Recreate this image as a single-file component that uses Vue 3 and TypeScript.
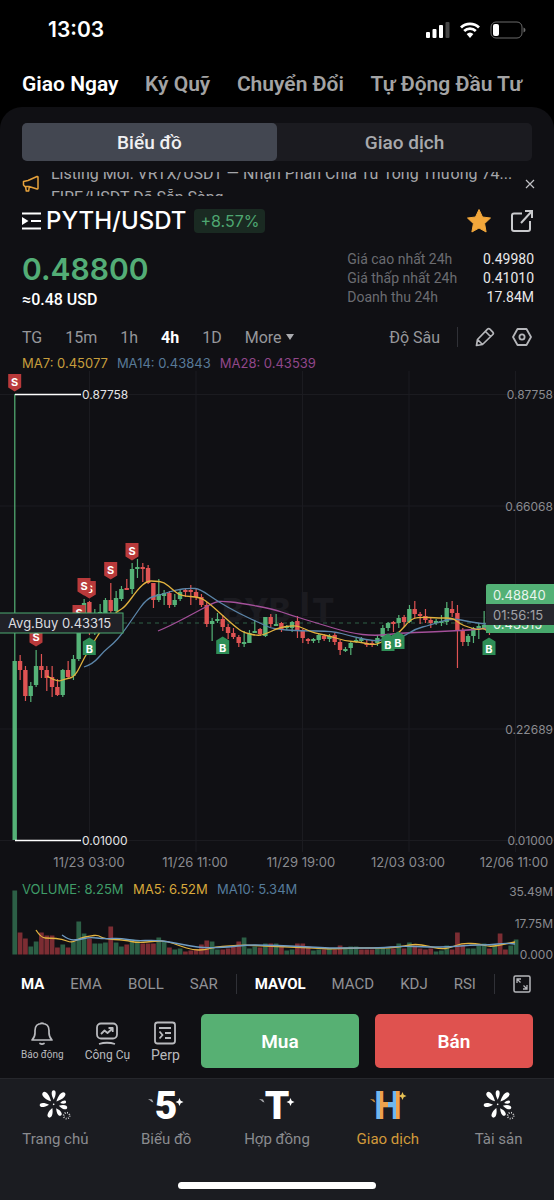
<script setup lang="ts">
import { ref } from 'vue'

type Side = 'g' | 'r'
type Candle = [side: Side, high: number, low: number, top: number, bottom: number]

const markets = ['Giao Ngay', 'Ký Quỹ', 'Chuyển Đổi', 'Tự Động Đầu Tư']
const market = ref(markets[0])
const views = ['Biểu đồ', 'Giao dịch']
const view = ref(views[0])
const frames = ['TG', '15m', '1h', '4h', '1D']
const frame = ref('4h')
const stats = [
  { label: 'Giá cao nhất 24h', value: '0.49980' },
  { label: 'Giá thấp nhất 24h', value: '0.41010' },
  { label: 'Doanh thu 24h', value: '17.84M' },
]
const mainIndicators = ['MA', 'EMA', 'BOLL', 'SAR']
const subIndicators = ['MAVOL', 'MACD', 'KDJ', 'RSI']
const mainIndicator = ref('MA')
const subIndicator = ref('MAVOL')

const STEP = 16 / 3
const cx = (i: number): number => 14.7 + i * STEP

const candles: Candle[] = [
  ['g', 394, 840, 661, 840], ['r', 655, 680, 661, 670], ['r', 666, 701, 670, 696], ['g', 682, 702, 686, 696],
  ['g', 650, 687, 666, 685], ['r', 654, 678, 666, 670], ['r', 666, 691, 670, 678], ['r', 666, 697, 677, 687],
  ['r', 679, 696, 687, 695], ['g', 669, 697, 670, 695], ['r', 661, 678, 670, 677], ['g', 655, 680, 659, 676],
  ['g', 610, 661, 612, 659], ['g', 599, 628, 603, 625], ['r', 601, 635, 602, 630], ['g', 609, 635, 614, 625],
  ['g', 604, 622, 612, 620], ['g', 598, 616, 600, 613], ['r', 583, 613, 600, 611], ['g', 591, 612, 598, 611],
  ['g', 586, 601, 589, 599], ['r', 579, 590, 588, 590], ['g', 563, 594, 569, 589], ['g', 559, 578, 567, 569],
  ['r', 563, 582, 567, 569], ['r', 565, 584, 568, 583], ['r', 583, 608, 583, 600], ['g', 579, 602, 594, 600],
  ['g', 590, 605, 593, 596], ['r', 591, 608, 593, 605], ['g', 594, 607, 600, 605], ['g', 590, 601, 592, 599],
  ['r', 588, 597, 590, 592], ['r', 585, 605, 590, 592], ['r', 588, 600, 592, 597], ['r', 594, 607, 597, 605],
  ['r', 602, 627, 605, 624], ['g', 618, 641, 621, 624], ['g', 613, 623, 619, 621], ['r', 615, 631, 619, 627],
  ['r', 624, 639, 627, 633], ['r', 628, 639, 633, 637], ['r', 635, 647, 637, 643], ['g', 631, 647, 642, 644],
  ['g', 630, 643, 633, 643], ['g', 620, 633, 631, 633], ['r', 628, 636, 629, 634], ['g', 617, 637, 617, 636],
  ['r', 614, 627, 617, 624], ['g', 614, 626, 624, 626], ['r', 622, 632, 623, 629], ['g', 625, 630, 626, 628],
  ['g', 621, 632, 622, 628], ['r', 616, 638, 621, 631], ['r', 629, 643, 631, 638], ['r', 638, 644, 639, 641],
  ['g', 638, 643, 639, 641], ['g', 634, 643, 635, 640], ['r', 634, 641, 636, 639], ['g', 634, 642, 636, 639],
  ['r', 633, 645, 635, 642], ['r', 640, 655, 642, 650], ['g', 647, 652, 649, 651], ['g', 641, 655, 643, 648],
  ['g', 638, 643, 640, 642], ['g', 637, 643, 639, 641], ['r', 640, 647, 643, 645], ['r', 640, 647, 643, 645],
  ['g', 635, 646, 638, 643], ['g', 625, 639, 628, 637], ['g', 622, 631, 623, 628], ['r', 621, 632, 622, 624],
  ['g', 615, 628, 618, 623], ['r', 615, 627, 617, 622], ['g', 605, 623, 609, 622], ['r', 601, 618, 609, 614],
  ['r', 612, 624, 614, 616], ['r', 609, 623, 616, 620], ['r', 617, 628, 620, 623], ['g', 619, 625, 621, 623],
  ['g', 615, 626, 621, 623], ['g', 602, 625, 608, 622], ['r', 601, 617, 609, 613], ['r', 605, 668, 613, 631],
  ['r', 628, 646, 630, 642], ['g', 634, 646, 636, 642], ['g', 627, 643, 628, 636], ['g', 623, 639, 626, 629],
  ['g', 611, 630, 625, 628], ['r', 627, 635, 629, 632],
]

const volumes =
  'g64 r22 r16 g8 g13 r22 r19 r19 r7 g10 r7 g13 g33 g21 r16 g11 g11 g12 r28 g12 g8 r10 g15 g14 r11 r11 r11 g17 g13 r7 g5 g6 r3 r4 r5 r10 r14 g13 g5 r5 r6 r8 r13 g17 g6 g8 r7 g11 r11 g11 r8 g4 g5 r11 r11 r8 g4 g5 r5 g6 r5 r9 g7 g8 g8 r5 r5 r5 g6 g7 g6 r6 g11 r6 g12 r9 r6 r5 r6 g3 g4 g9 r5 r22 r10 g6 g6 g9 g11 r6 g9 r21 r5 g9 g15'
    .split(' ')
    .map((v) => ({ side: v[0] as Side, size: Number(v.slice(1)) }))

// Smooth curve through a list of points, using quadratic segments between midpoints
function curve(source: string): string {
  const pts = source.split(' ').map((p) => p.split(',').map(Number))
  let d = `M${pts[0][0]} ${pts[0][1]}`
  for (let i = 1; i < pts.length - 1; i++) {
    const [x, y] = pts[i]
    const [nx, ny] = pts[i + 1]
    d += ` Q${x} ${y} ${(x + nx) / 2} ${(y + ny) / 2}`
  }
  const last = pts[pts.length - 1]
  return `${d} L${last[0]} ${last[1]}`
}

const ma7 = curve('47,676 57,682 65,679 75,677 84,658 95,640 100,632 110,618 118,611 125,607 138,589 147,581 155,581 164,582 173,590 181,596 200,597 210,604 222,615 238,629 245,633 259,636 268,633 278,628 295,625 305,629 314,633 330,636 345,641 360,642 373,645 380,643 390,638 400,632 410,620 418,617 440,618 453,618 460,624 468,627 478,630 484,628 488,632')
const ma14 = curve('84,667 93,664 104,651 113,644 122,634 133,618 147,598 160,595 175,590 190,588 200,589 217,601 240,614 262,624 273,629 300,631 333,631 350,636 373,641 382,640 403,637 415,629 430,625 452,618 470,622 486,624')
const ma28 = curve('158,631 170,626 200,610 215,602 222,601 240,603 273,609 290,615 320,624 350,633 375,636 400,633 430,632 450,631 470,630 488,628')
const vol5 = curve('36,930 41,938 50,938 62,939 72,943 80,938 90,936 98,935 104,939 125,940 138,943 155,941 167,941 180,946 193,950 205,950 215,947 230,946 245,945 265,946 290,947 315,948 330,949 350,948 370,948 390,948 405,946 415,944 428,946 440,949 450,948 462,943 480,944 490,947 505,944 515,942')
const vol10 = curve('62,935 69,940 78,940 90,937 104,939 120,938 135,941 155,940 170,942 190,946 205,948 230,947 245,945 265,945 290,946 310,947 330,948 350,948 380,948 400,946 430,947 450,947 470,945 490,945 505,943 515,944')

const sells = [
  [14.7, 374], [36, 629], [79, 605], [89.3, 581], [84, 578], [110.7, 562], [132, 543],
]
const buys = [[89.3, 655], [222.7, 654], [388, 651], [398, 649], [489, 655]]

const priceTicks = [
  { y: 399, text: '0.87758' }, { y: 511, text: '0.66068' }, { y: 734, text: '0.22689' }, { y: 845, text: '0.01000' },
]
const volTicks = [{ y: 896, text: '35.49M' }, { y: 928, text: '17.75M' }, { y: 959, text: '0.000' }]
const dates = [
  { x: 89, text: '11/23 03:00' }, { x: 195, text: '11/26 11:00' }, { x: 301, text: '11/29 19:00' }, { x: 408, text: '12/03 03:00' }, { x: 514, text: '12/06 11:00' },
]

const petals = [
  { a: 0, s: 14, e: 42, w: 8 }, { a: 44, s: 12, e: 48, w: 10 }, { a: 78, s: 20, e: 38, w: 6 }, { a: 105, s: 16, e: 42, w: 8 },
  { a: 147, s: 14, e: 40, w: 8 }, { a: 200, s: 12, e: 42, w: 9 }, { a: 266, s: 14, e: 42, w: 8 }, { a: 318, s: 12, e: 48, w: 10 },
]
const petalPath = (s: number, e: number, w: number): string =>
  `M0 ${-s} C${-w} ${-(s + e) / 2} ${-w} ${-e} 0 ${-e} C${w} ${-e} ${w} ${-(s + e) / 2} 0 ${-s}Z`

const nav = [
  { label: 'Trang chủ', icon: 'spark' },
  { label: 'Biểu đồ', icon: '5' },
  { label: 'Hợp đồng', icon: 'T' },
  { label: 'Giao dịch', icon: 'H' },
  { label: 'Tài sản', icon: 'spark' },
]
const activeNav = 'Giao dịch'
</script>

<template>
  <div class="app">
    <header class="status">
      <time class="clock">13:03</time>
      <div class="status-icons">
        <svg width="24" height="18" viewBox="0 0 24 18" aria-hidden="true">
          <rect x="0" y="11" width="4" height="6" rx="1" fill="#fff" />
          <rect x="6.500" y="8" width="4" height="9" rx="1" fill="#fff" />
          <rect x="13" y="4" width="4" height="13" rx="1" fill="#fff" />
          <rect x="19.500" y="1" width="4" height="16" rx="1" fill="#444" />
        </svg>
        <svg width="22" height="18" viewBox="0 0 22 18" aria-hidden="true">
          <path d="M2 6.500a13 13 0 0 1 18 0M5.200 10a8.500 8.500 0 0 1 11.600 0" fill="none" stroke="#fff" stroke-width="2.800" />
          <path d="M7.600 13a5 5 0 0 1 6.800 0L11 17z" fill="#fff" />
        </svg>
        <svg width="36" height="18" viewBox="0 0 36 18" aria-hidden="true">
          <rect x="1" y="1" width="31" height="16" rx="5" fill="none" stroke="#6a6a6a" />
          <rect x="3" y="3" width="6" height="12" rx="2" fill="#fff" />
          <path d="M33.500 6.500v5q2-.6 2-2.500t-2-2.500" fill="#6a6a6a" />
        </svg>
      </div>
    </header>

    <nav class="markets">
      <button v-for="m in markets" :key="m" type="button" :class="{ on: market === m }" @click="market = m">{{ m }}</button>
    </nav>

    <main class="panel">
      <div class="segment">
        <button v-for="v in views" :key="v" type="button" :class="{ on: view === v }" @click="view = v">{{ v }}</button>
      </div>

      <div class="notice">
        <svg width="18" height="18" viewBox="0 0 18 18" fill="none" stroke="#e6a23c" stroke-width="1.500" stroke-linejoin="round" aria-hidden="true">
          <path d="M1.500 6.500 6 5.500 15 1.500q1-.3 1 .8v11q0 1-1 .7L7 11.500H2.800L1.500 10zM3.500 11.500l.8 4.500h2.400l.6-4.500" />
        </svg>
        <div class="ticker">
          <p>Listing Mới: VRTX/USDT — Nhận Phần Chia Từ Tổng Thưởng 74...</p>
          <p>FIRE/USDT Đã Sẵn Sàng</p>
        </div>
        <button type="button" class="icon-btn" aria-label="Đóng">
          <svg width="12" height="12" viewBox="0 0 12 12" stroke="#c0c1c5" stroke-width="1.200"><path d="M2 2l8 8M10 2l-8 8" /></svg>
        </button>
      </div>

      <section class="summary">
        <div class="pair">
          <svg width="20" height="18" viewBox="0 0 20 18" aria-hidden="true">
            <path d="M0 1.500h19M9 9h10M0 16.500h19" stroke="#fff" stroke-width="2.200" fill="none" />
            <path d="M0 5 6.500 9 0 13z" fill="#fff" />
          </svg>
          <h1>PYTH/USDT</h1>
          <span class="change">+8.57%</span>
          <div class="pair-tools">
            <button type="button" class="icon-btn" aria-label="Yêu thích">
              <svg width="26" height="26" viewBox="0 0 26 26"><path d="M13 1.500 16.500 9l8 1-5.900 5.600 1.500 8.400-7.100-4-7.100 4 1.500-8.400L1.500 10l8-1z" fill="#f2a73b" stroke="#f2a73b" stroke-linejoin="round" /></svg>
            </button>
            <button type="button" class="icon-btn" aria-label="Chia sẻ">
              <svg width="24" height="24" viewBox="0 0 24 24" fill="none" stroke="#c9cacd" stroke-width="2"><path d="M12 4.500H4q-2 0-2 2V20q0 2 2 2h14q2 0 2-2v-8M15 2h7v7M22 2 11 14" /></svg>
            </button>
          </div>
        </div>
        <div class="figures">
          <div>
            <strong class="price">0.48800</strong>
            <p class="usd">≈0.48 USD</p>
          </div>
          <dl class="stats">
            <template v-for="s in stats" :key="s.label">
              <dt>{{ s.label }}</dt>
              <dd>{{ s.value }}</dd>
            </template>
          </dl>
        </div>
      </section>

      <div class="frames">
        <button v-for="f in frames" :key="f" type="button" :class="{ on: frame === f }" @click="frame = f">{{ f }}</button>
        <button type="button" class="more">More<svg width="8" height="6" viewBox="0 0 8 6"><path d="M0 0h8L4 6z" fill="#aaabaf" /></svg></button>
        <div class="frame-tools">
          <button type="button">Độ Sâu</button>
          <i class="rule"></i>
          <button type="button" class="icon-btn" aria-label="Vẽ">
            <svg width="20" height="20" viewBox="0 0 20 20" fill="none" stroke="#b5b6ba" stroke-width="1.700" stroke-linejoin="round"><path d="M1.500 18.500l1-6L12.500 2.200q1.200-1.200 2.400 0l2.900 2.900q1.200 1.200 0 2.400L7.500 17.500zM2.500 12.500l5 5M10.500 4.500l5 5" /></svg>
          </button>
          <button type="button" class="icon-btn" aria-label="Cài đặt">
            <svg width="20" height="20" viewBox="0 0 20 20" fill="none" stroke="#b5b6ba" stroke-width="1.800" stroke-linejoin="round"><path d="M5.500 2h9L19 10l-4.500 8h-9L1 10z" /><circle cx="10" cy="10" r="2.600" /></svg>
          </button>
        </div>
      </div>

      <p class="legend">
        <span class="yellow">MA7: 0.45077</span><span class="blue">MA14: 0.43843</span><span class="pink">MA28: 0.43539</span>
      </p>

      <svg class="chart" viewBox="0 371 554 593" role="img" aria-label="PYTH/USDT 4h">
        <g class="grid">
          <path v-for="x in [89.5, 196, 302.5, 409, 515.500]" :key="x" :d="`M${x} 371V852`" />
          <path v-for="y in [394.5, 506, 617.5, 729, 840.5]" :key="y" :d="`M0 ${y}H554`" />
        </g>
        <text class="mark" y="622"><tspan x="222">BYB</tspan><tspan x="300" dy="-6">I</tspan><tspan x="312" dy="6">T</tspan></text>
        <path d="M123 623H486" stroke="#2e6146" stroke-dasharray="4 4" />

        <g v-for="(c, i) in candles" :key="i" :class="c[0]">
          <rect :x="cx(i) - 0.5" :y="c[1]" width="1.200" :height="c[2] - c[1]" />
          <rect :x="cx(i) - 2.200" :y="c[3]" width="4.400" :height="Math.max(1, c[4] - c[3])" />
        </g>

        <g class="line">
          <path :d="ma28" stroke="#a4509a" />
          <path :d="ma14" stroke="#5c86aa" />
          <path :d="ma7" stroke="#e2b23e" />
        </g>

        <path d="M15 394.500H81M15 840.500H81" stroke="#fff" stroke-width="1.300" />
        <text class="extreme" x="82" y="399">0.87758</text>
        <text class="extreme" x="82" y="845">0.01000</text>

        <g v-for="(s, i) in sells" :key="'s' + i" :transform="`translate(${s[0]} ${s[1]})`">
          <path d="M-6.500 0h13v13.500L0 17.500l-6.500-4z" fill="#b93a3b" />
          <text class="flag" y="12">S</text>
        </g>
        <g v-for="(b, i) in buys" :key="'b' + i" :transform="`translate(${b[0]} ${b[1]})`">
          <path d="M-6.500 0h13v-13.500L0-17.500l-6.500 4z" fill="#2f8f57" />
          <text class="flag" y="-2">B</text>
        </g>

        <rect x="-1" y="613" width="124" height="20" fill="#202127" stroke="#4cab72" />
        <text class="avg" x="8" y="628">Avg.Buy 0.43315</text>

        <text v-for="t in priceTicks" :key="t.y" class="tick" x="553" :y="t.y">{{ t.text }}</text>
        <rect x="486" y="613" width="68" height="20" fill="#47a86c" />
        <text class="badge" x="493" y="629">0.43315</text>
        <rect x="486" y="604" width="68" height="21" fill="#25262c" />
        <text class="badge dim" x="493" y="620">01:56:15</text>
        <path d="M486 604v-18q0-2 2-2h66v20z" fill="#53b176" />
        <text class="badge" x="493" y="600">0.48840</text>

        <text v-for="d in dates" :key="d.x" class="date" :x="d.x" y="867">{{ d.text }}</text>

        <g v-for="(v, i) in volumes" :key="'v' + i" :class="['vol', v.side]">
          <rect :x="cx(i) - 2.300" :y="954.500 - v.size" width="4.700" :height="v.size" />
        </g>
        <g class="line">
          <path :d="vol5" stroke="#e2b23e" />
          <path :d="vol10" stroke="#6f9cc4" />
        </g>
        <text class="vol-legend" x="22" y="894" fill="#3f9c68">VOLUME: 8.25M</text>
        <text class="vol-legend" x="133" y="894" fill="#d8a93b">MA5: 6.52M</text>
        <text class="vol-legend" x="217" y="894" fill="#567c9c">MA10: 5.34M</text>
        <text v-for="t in volTicks" :key="t.y" class="tick" x="553" :y="t.y">{{ t.text }}</text>
      </svg>

      <div class="indicators">
        <div class="group">
          <button v-for="m in mainIndicators" :key="m" type="button" :class="{ on: mainIndicator === m }" @click="mainIndicator = m">{{ m }}</button>
        </div>
        <i class="rule"></i>
        <div class="group">
          <button v-for="s in subIndicators" :key="s" type="button" :class="{ on: subIndicator === s }" @click="subIndicator = s">{{ s }}</button>
        </div>
        <i class="rule"></i>
        <button type="button" class="icon-btn" aria-label="Toàn màn hình">
          <svg width="18" height="18" viewBox="0 0 18 18" fill="none" stroke="#b5b6ba" stroke-width="1.500"><rect x="1" y="1" width="16" height="16" rx="1.500" /><path d="M4 8V4h4M4 4l3.500 3.500M14 10v4h-4M14 14l-3.500-3.500" stroke-width="1.300" /></svg>
        </button>
      </div>

      <div class="actions">
        <button type="button" class="tool small">
          <svg width="28" height="28" viewBox="0 0 28 28" fill="none" stroke="#b9babe" stroke-width="1.700" stroke-linejoin="round" stroke-linecap="round"><path d="M4 21h20c-2-2-3-4-3-7v-2.500q0-7-7-7t-7 7V14c0 3-1 5-3 7zM12.500 4.500q1.500-1 3 0M12 24.500q2 1.200 4 0" /></svg>
          <span>Báo động</span>
        </button>
        <button type="button" class="tool mid">
          <svg width="28" height="28" viewBox="0 0 28 28" fill="none" stroke="#b9babe" stroke-width="1.800" stroke-linejoin="round"><rect x="4" y="4.500" width="20" height="15" rx="4" /><path d="M8 15l3.500-3.500 3 2.500 5-4.500M15.500 9h4.200v4M6 25q8-2.500 16 0" /></svg>
          <span>Công Cụ</span>
        </button>
        <button type="button" class="tool">
          <svg width="28" height="28" viewBox="0 0 28 28" fill="none" stroke="#b9babe" stroke-width="1.800"><rect x="4" y="3.500" width="20" height="21" rx="2.500" /><path d="M8 9h12M14 14h6M14 19h6M8.500 12.500l3 3.500-3 3.500" /></svg>
          <span>Perp</span>
        </button>
        <button type="button" class="trade buy">Mua</button>
        <button type="button" class="trade sell">Bán</button>
      </div>
    </main>

    <footer class="bottom">
      <nav>
        <a v-for="n in nav" :key="n.label" href="#" :class="{ on: n.label === activeNav }">
          <svg v-if="n.icon === 'spark'" width="32" height="32" viewBox="0 0 96 96" fill="#fff" aria-hidden="true">
            <g transform="translate(44 46)">
              <path v-for="p in petals" :key="p.a" :d="petalPath(p.s, p.e, p.w)" :transform="`rotate(${p.a})`" />
              <circle r="2.500" />
            </g>
            <circle cx="83" cy="80" r="9" fill="none" stroke="#e8e8e8" stroke-width="5" stroke-dasharray="2.500 4.570" />
          </svg>
          <svg v-else class="glyph" width="36" height="32" viewBox="0 0 36 32" aria-hidden="true">
            <defs>
              <linearGradient id="duo" gradientUnits="userSpaceOnUse" x1="6" x2="30" y1="0" y2="0">
                <stop offset=".17" stop-color="#6fb7ee" /><stop offset=".17" stop-color="#eea24c" />
                <stop offset=".5" stop-color="#eea24c" /><stop offset=".5" stop-color="#6fb7ee" />
                <stop offset=".84" stop-color="#6fb7ee" /><stop offset=".84" stop-color="#eea24c" />
              </linearGradient>
            </defs>
            <text class="letter" x="18" y="30" :fill="n.icon === 'H' ? 'url(#duo)' : '#fff'">{{ n.icon }}</text>
            <path :fill="n.icon === 'H' ? '#e8c255' : '#fff'" :transform="n.icon === 'H' ? 'translate(1 -6)' : ''" d="M31.500 9l1.200 2.800 2.800 1.200-2.800 1.200-1.200 2.800-1.200-2.800-2.800-1.200 2.800-1.200z" />
            <path :fill="n.icon === 'H' ? '#c78a3a' : '#a9aaae'" d="M0 10l4 .5 1.500 3-2-.8-1-.9z" />
          </svg>
          <span>{{ n.label }}</span>
        </a>
      </nav>
      <div class="home-bar"></div>
    </footer>
  </div>
</template>

<style>
body {
  margin: 0;
  background: #000;
}
</style>

<style scoped>
.app {
  --ui: Roboto, 'Noto Sans', sans-serif;
  --num: Inter, 'Liberation Sans', sans-serif;
  min-height: 100vh;
  background: #000;
  color: #fff;
  font-family: var(--ui);
  display: flex;
  flex-direction: column;
}
h1, p, dl, dd { margin: 0; }
button {
  border: 0;
  padding: 0;
  background: none;
  color: inherit;
  font: inherit;
  white-space: nowrap;
}
.icon-btn { display: flex; }
.rule { width: 1px; height: 20px; background: #303137; }

.status {
  height: 60px;
  padding: 0 28px 0 48px;
  display: flex;
  align-items: center;
  justify-content: space-between;
}
.clock { font: 600 21px/24px var(--num); }
.status-icons { display: flex; align-items: center; gap: 9px; }

.markets {
  height: 47px;
  padding: 0 32px 0 22px;
  display: flex;
  align-items: center;
  justify-content: space-between;
  font-size: 21px;
  font-weight: 600;
  color: #a3a3a4;
}
.markets .on { color: #fff; }

.panel {
  flex: 1;
  background: #101014;
  border-radius: 22px 22px 0 0;
  padding-top: 16px;
}
.segment {
  margin: 0 22px;
  height: 38px;
  display: flex;
  background: #1b1b20;
  border-radius: 5px;
}
.segment button {
  flex: 1;
  border-radius: 5px;
  font-size: 19px;
  font-weight: 500;
  color: #a8a9ac;
}
.segment .on { background: #434751; color: #f0f0f2; }

.notice {
  margin: 11px 18px 0 22px;
  height: 24px;
  display: flex;
  align-items: center;
  gap: 11px;
}
.ticker {
  flex: 1;
  min-width: 0;
  height: 24px;
  overflow: hidden;
  font-size: 16px;
  line-height: 24px;
  color: #a5a6aa;
}
.ticker p { white-space: nowrap; }
.ticker p:first-child { margin-top: -10px; }

.summary { padding: 8px 20px 0 22px; }
.pair { height: 34px; display: flex; align-items: center; }
.pair h1 { margin-left: 4px; font: 500 24px/34px var(--num); }
.change {
  margin-left: 8px;
  padding: 0 6px;
  border-radius: 4px;
  background: #1a2a22;
  color: #4ea671;
  font: 16px/24px var(--num);
}
.pair-tools { margin-left: auto; display: flex; align-items: center; gap: 18px; }
.figures { margin-top: 12px; display: flex; justify-content: space-between; }
.price { display: block; font: 600 30px/38px var(--num); color: #53ad76; }
.usd { font-size: 16px; font-weight: 500; line-height: 24px; }
.stats {
  display: grid;
  grid-template-columns: auto auto;
  column-gap: 26px;
  align-content: start;
  font-size: 14px;
  line-height: 19px;
}
.stats dt { color: #6b6c71; }
.stats dd { text-align: right; color: #e8e8ea; }

.frames {
  height: 38px;
  margin-top: 6px;
  padding: 0 22px;
  display: flex;
  align-items: center;
  gap: 23px;
  font-size: 16px;
  color: #96979b;
}
.frames .on { color: #fff; font-weight: 700; }
.more { display: flex; align-items: center; gap: 4px; }
.frame-tools { margin-left: auto; display: flex; align-items: center; gap: 17px; }

.legend {
  padding: 0 0 1px 22px;
  display: flex;
  gap: 9px;
  font: 13px/14px var(--num);
}
.yellow { color: #c79e3c; }
.blue { color: #587a98; }
.pink { color: #91478a; }

.chart { display: block; width: 100%; font-family: Inter, 'Liberation Sans', sans-serif; }
.grid { stroke: #1b1b20; fill: none; }
.g { fill: #55b277; }
.r { fill: #df5353; }
.vol.g { fill: #2c5f46; }
.vol.r { fill: #7c2d33; }
.line { fill: none; stroke-width: 1.3; }
.mark { font-size: 33px; font-weight: 800; fill: #1b1b20; }
.extreme { font-size: 12px; fill: #e4e4e6; }
.tick { font-size: 12px; fill: #8a8b90; text-anchor: end; }
.date { font-size: 13px; fill: #8a8b90; text-anchor: middle; }
.flag { font-size: 11px; font-weight: 700; fill: #fff; text-anchor: middle; }
.avg { font-size: 13px; fill: #dcdde0; }
.badge { font-size: 13px; fill: #e9f5ee; }
.dim { fill: #a0a1a6; }
.vol-legend { font-size: 13px; }

.indicators {
  height: 40px;
  padding: 0 23px 0 21px;
  display: flex;
  align-items: center;
  justify-content: space-between;
  font-size: 15px;
  color: #909195;
}
.indicators .on { color: #fff; font-weight: 700; }
.group { display: flex; gap: 26px; }

.actions {
  padding: 10px 21px;
  display: flex;
  align-items: center;
}
.tool {
  margin-right: 21px;
  display: flex;
  flex-direction: column;
  align-items: center;
  color: #b9babe;
  font-size: 14px;
  line-height: 16px;
}
.tool.small { font-size: 10px; }
.tool.mid { font-size: 12px; }
.trade {
  flex: 1;
  height: 54px;
  border-radius: 5px;
  font-size: 19px;
  font-weight: 600;
}
.buy { background: #57b073; margin-right: 16px; }
.sell { background: #df524f; }

.bottom {
  height: 122px;
  box-sizing: border-box;
  border-top: 1px solid #26272c;
  background: #1b1c21;
  display: flex;
  flex-direction: column;
  align-items: center;
  justify-content: space-between;
  padding: 10px 0 11px;
}
.bottom nav { align-self: stretch; display: flex; }
.bottom a {
  flex: 1;
  display: flex;
  flex-direction: column;
  align-items: center;
  gap: 6px;
  text-decoration: none;
  color: #8a8b8f;
  font-size: 15px;
  line-height: 24px;
}
.bottom .on { color: #d29a3a; }
.glyph { overflow: visible; }
.letter { font: 900 39px Roboto, sans-serif; text-anchor: middle; }
.home-bar { width: 198px; height: 7px; border-radius: 4px; background: #fff; }
</style>
